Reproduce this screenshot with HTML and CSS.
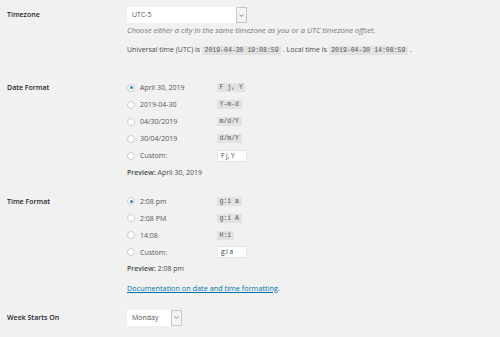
FILE: index.html
```html
<!DOCTYPE html>
<html lang="en">
<head>
    <meta charset="UTF-8">
    <title>General Settings</title>
    <link rel="stylesheet" href="styles.css">
</head>
<body>

<div class="settings">
    <div class="row row-timezone">
        <div class="label label-select">Timezone</div>
        <div class="field">
            <div class="select select-wide">
                <span class="select-value">UTC-5</span>
                <span class="select-arrow"><svg width="5" height="3" viewBox="0 0 5 3"><path d="M0.5 0.5 L2.5 2.5 L4.5 0.5" fill="none" stroke="#666" stroke-width="0.8"/></svg></span>
            </div>
            <p class="description">Choose either a city in the same timezone as you or a UTC timezone offset.</p>
            <p class="times">Universal time (UTC) is <code>2019-04-30 19:08:59</code> . Local time is <code>2019-04-30 14:08:59</code> .</p>
        </div>
    </div>

    <div class="row row-date">
        <div class="label">Date Format</div>
        <div class="field">
            <div class="choice"><span class="radio checked"></span><span class="choice-text">April 30, 2019</span><code>F j, Y</code></div>
            <div class="choice"><span class="radio"></span><span class="choice-text">2019-04-30</span><code>Y-m-d</code></div>
            <div class="choice"><span class="radio"></span><span class="choice-text">04/30/2019</span><code>m/d/Y</code></div>
            <div class="choice"><span class="radio"></span><span class="choice-text">30/04/2019</span><code>d/m/Y</code></div>
            <div class="choice"><span class="radio"></span><span class="choice-text">Custom:</span><span class="text-input">F j, Y</span></div>
            <p class="preview"><strong>Preview:</strong> April 30, 2019</p>
        </div>
    </div>

    <div class="row row-time">
        <div class="label">Time Format</div>
        <div class="field">
            <div class="choice"><span class="radio checked"></span><span class="choice-text">2:08 pm</span><code>g:i a</code></div>
            <div class="choice"><span class="radio"></span><span class="choice-text">2:08 PM</span><code>g:i A</code></div>
            <div class="choice"><span class="radio"></span><span class="choice-text">14:08</span><code>H:i</code></div>
            <div class="choice"><span class="radio"></span><span class="choice-text">Custom:</span><span class="text-input">g:i a</span></div>
            <p class="preview"><strong>Preview:</strong> 2:08 pm</p>
            <p class="doc"><a href="#">Documentation on date and time formatting</a>.</p>
        </div>
    </div>

    <div class="row row-week">
        <div class="label label-select">Week Starts On</div>
        <div class="field">
            <div class="select select-small">
                <span class="select-value">Monday</span>
                <span class="select-arrow"><svg width="5" height="3" viewBox="0 0 5 3"><path d="M0.5 0.5 L2.5 2.5 L4.5 0.5" fill="none" stroke="#666" stroke-width="0.8"/></svg></span>
            </div>
        </div>
    </div>
</div>

</body>
</html>
```

FILE: styles.css
```css
body {
    font-family: "Open Sans", "Noto Sans", sans-serif;
    font-size: 7px;
    background-color: #f1f1f1;
    color: #4a4a4a;
    margin: 0;
}
.settings {
    padding: 7px 0 0 7px;
}
.row {
    display: grid;
    grid-template-columns: 120px 1fr;
}
.row-date {
    margin-top: 24px;
}
.row-time {
    margin-top: 15px;
}
.row-week {
    margin-top: 17px;
}
.label {
    color: #23282d;
    font-weight: 600;
    line-height: 17px;
}
.label-select {
    line-height: 16px;
}
p {
    margin: 0;
    line-height: 10px;
}

/* selects */
.select {
    display: flex;
    height: 16px;
    box-sizing: border-box;
}
.select-wide {
    width: 120px;
}
.select-small {
    width: 55px;
}
.select-value {
    flex: 1;
    background-color: #fff;
    padding-left: 5px;
    line-height: 16px;
    color: #555;
}
.select-arrow {
    width: 9px;
    border: 1px solid #c8c8c8;
    background-color: #f3f3f3;
    display: flex;
    align-items: center;
    justify-content: center;
}

.description {
    margin-top: 2px;
    font-style: italic;
    font-size: 7.6px;
    color: #777;
}
.times {
    margin-top: 10px;
}

code {
    display: inline-block;
    font-family: "Liberation Mono", "DejaVu Sans Mono", monospace;
    font-size: 6.5px;
    line-height: 7px;
    padding: 1px 2.5px;
    background-color: rgba(0, 0, 0, 0.06);
    color: #555;
    vertical-align: middle;
}

/* radio lists */
.choice {
    display: flex;
    align-items: center;
    height: 17px;
}
.radio {
    width: 8px;
    height: 8px;
    box-sizing: border-box;
    border: 1px solid #c9ccce;
    border-radius: 50%;
    background-color: #fff;
    margin-right: 5px;
    display: flex;
    align-items: center;
    justify-content: center;
}
.radio.checked::after {
    content: "";
    width: 3px;
    height: 3px;
    border-radius: 50%;
    background-color: #1e8cbe;
}
.choice-text {
    width: 77px;
    color: #555;
}
.text-input {
    width: 30px;
    height: 12px;
    box-sizing: border-box;
    background-color: #fff;
    border: 1px solid #e6e6e6;
    padding-left: 3px;
    line-height: 10px;
    font-size: 6.5px;
    color: #32373c;
}
.preview {
    margin-top: 3.5px;
}
.preview strong {
    font-weight: 600;
}
.doc {
    margin-top: 8.5px;
    font-size: 7.3px;
}
.doc a {
    color: #0073aa;
}
```
